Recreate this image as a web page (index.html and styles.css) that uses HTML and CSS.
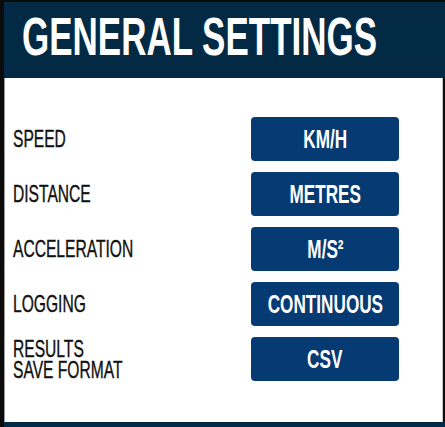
FILE: index.html
```html
<!DOCTYPE html>
<html lang="en">

<head>
    <meta charset="UTF-8">
    <meta name="viewport" content="width=device-width, initial-scale=1.0">
    <title>General Settings</title>
    <link rel="stylesheet" href="styles.css">
</head>

<body>

    <div class="panel">
        <div class="header">
            <h1><span class="squeeze">GENERAL SETTINGS</span></h1>
        </div>

        <div class="content">
            <div class="row">
                <div class="label"><span class="squeeze">SPEED</span></div>
                <button class="option"><span class="squeeze">KM/H</span></button>
            </div>
            <div class="row">
                <div class="label"><span class="squeeze">DISTANCE</span></div>
                <button class="option"><span class="squeeze">METRES</span></button>
            </div>
            <div class="row">
                <div class="label"><span class="squeeze">ACCELERATION</span></div>
                <button class="option"><span class="squeeze">M/S²</span></button>
            </div>
            <div class="row">
                <div class="label"><span class="squeeze">LOGGING</span></div>
                <button class="option"><span class="squeeze">CONTINUOUS</span></button>
            </div>
            <div class="row">
                <div class="label">
                    <span class="squeeze line">RESULTS</span>
                    <span class="squeeze line">SAVE FORMAT</span>
                </div>
                <button class="option"><span class="squeeze">CSV</span></button>
            </div>
        </div>

        <div class="footer"></div>
    </div>

</body>

</html>
```

FILE: styles.css
```css
* {
    margin: 0;
    padding: 0;
    box-sizing: border-box;
    font-family: "Liberation Sans", Arial, sans-serif;
}

body {
    width: 445px;
    height: 427px;
    background-color: #0b0b0b;
    overflow: hidden;
}

.panel {
    display: flex;
    flex-direction: column;
    height: 100%;
    padding-top: 2px;
    padding-left: 4px;
}

.header {
    height: 76px;
    background-color: #022a44;
    display: flex;
    align-items: center;
    padding-left: 18px;
    padding-bottom: 7px;
}

h1 {
    color: white;
    font-size: 53px;
    font-weight: bold;
    line-height: 1;
    white-space: nowrap;
}

.squeeze {
    display: inline-block;
    transform: scaleX(0.66);
    transform-origin: left center;
    white-space: nowrap;
}

/* the scaled title keeps its full layout width, pull it back in */
h1 .squeeze {
    margin-right: -184px;
}

.content {
    flex: 1;
    background-color: white;
    border-left: 1px solid #9a9a9a;
    border-right: 1px solid #c8c8c8;
    margin-right: 2px;
    padding: 39px 43px 0 8px;
    display: flex;
    flex-direction: column;
    gap: 11px;
}

.row {
    display: flex;
    align-items: center;
    justify-content: space-between;
    height: 44px;
}

.label {
    color: #111;
    font-size: 24px;
    line-height: 22px;
    -webkit-text-stroke: 0.4px #111;
}

.label .squeeze {
    transform: scaleX(0.65);
}

.label .line {
    display: block;
    height: 21px;
}

.option {
    flex: none;
    width: 148px;
    height: 44px;
    border: none;
    border-radius: 4px;
    background-color: #053a72;
    color: white;
    font-size: 26px;
    font-weight: bold;
    display: flex;
    align-items: center;
    justify-content: center;
    cursor: pointer;
}

.option .squeeze {
    transform-origin: center center;
}

.footer {
    height: 5px;
    background-color: #022a44;
}
```
